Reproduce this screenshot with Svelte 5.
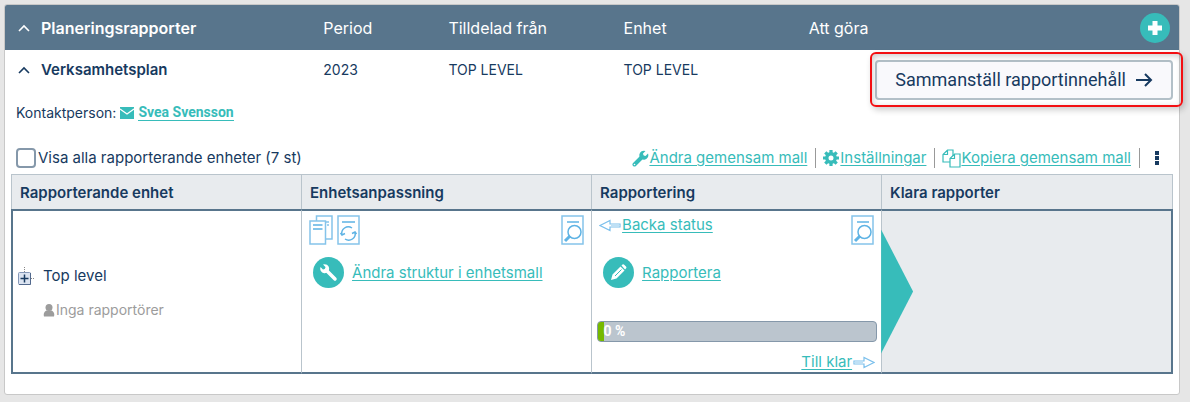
<script lang="ts">
  const columns = ['Period', 'Tilldelad från', 'Enhet', 'Att göra']
  const headings = ['Rapporterande enhet', 'Enhetsanpassning', 'Rapportering', 'Klara rapporter']

  let showAll = $state(false)
  let progress = $state(0)

  // keep a sliver of the bar visible at zero
  const barWidth = $derived(Math.max(progress, 2))
</script>

{#snippet chevron()}
  <svg class="chevron" width="12" height="8" viewBox="0 0 12 8" aria-hidden="true">
    <path d="M1 7 6 2l5 5" fill="none" stroke="currentColor" stroke-width="1.6" />
  </svg>
{/snippet}

{#snippet previewIcon()}
  <svg width="24" height="30" viewBox="0 0 24 30" fill="none" stroke="#5eb3e4" aria-hidden="true">
    <path d="M1 1h21v28H1z" stroke="#85c4ea" stroke-width="1.5" />
    <path d="M6 7h12" stroke-width="1.5" />
    <circle cx="13.5" cy="17" r="6.5" stroke-width="1.5" />
    <path d="m9 21-5 5" stroke-width="3" />
  </svg>
{/snippet}

{#snippet arrow()}
  <path d="M1 6.5 11 1.5v3.500h10v3H11v3.500z" fill="#fff" stroke="#7cc0ec" stroke-width="1.2" />
  <path d="M12 5.500h8.500v2H12z" fill="#bfe0f5" />
{/snippet}

<main class="panel">
  <header class="grid panel-header">
    <button class="toggle title">{@render chevron()}Planeringsrapporter</button>
    {#each columns as column}
      <span>{column}</span>
    {/each}
    <button class="add" aria-label="Lägg till">
      <svg width="16" height="16" viewBox="0 0 16 16" aria-hidden="true">
        <path d="M8 1v14M1 8h14" stroke="#fff" stroke-width="5" />
      </svg>
    </button>
  </header>

  <section class="grid plan">
    <button class="toggle">{@render chevron()}Verksamhetsplan</button>
    <span>2023</span>
    <span>TOP LEVEL</span>
    <span>TOP LEVEL</span>
    <div class="compile">
      <button>
        Sammanställ rapportinnehåll
        <svg width="17" height="16" viewBox="0 0 17 16" aria-hidden="true">
          <path d="M0 8h15M9 2l6 6-6 6" fill="none" stroke="currentColor" stroke-width="2" />
        </svg>
      </button>
    </div>
  </section>

  <div class="contact">
    Kontaktperson:
    <svg width="14" height="12" viewBox="0 0 14 12" aria-hidden="true">
      <path d="M0 0h14v12H0z" fill="#37bcba" />
      <path d="m0 2 7 5 7-5" fill="none" stroke="#fff" stroke-width="1.3" />
    </svg>
    <a href="#contact">Svea Svensson</a>
  </div>

  <div class="toolbar">
    <label>
      <input type="checkbox" bind:checked={showAll} />
      Visa alla rapporterande enheter (7 st)
    </label>
    <nav>
      <a href="#template">
        <svg width="17" height="17" viewBox="0 0 17 17" aria-hidden="true">
          <path d="m2.500 14.500 7.500-7.500" stroke="#37bcba" stroke-width="4" stroke-linecap="round" />
          <path d="M13.500 1 11 3.500l.5 2 2 .5L16 3.500A4.500 4.500 0 1 1 13.500 1z" fill="#37bcba" />
          <circle cx="2.500" cy="14.500" r=".8" fill="#fff" />
        </svg><span>Ändra gemensam mall</span>
      </a>
      <a href="#settings">
        <svg width="17" height="16" viewBox="0 0 17 16" fill="none" stroke="#37bcba" aria-hidden="true">
          <circle cx="8" cy="8" r="4.200" stroke-width="3.400" />
          <path d="M8 0v3M8 13v3M0 8h3M13 8h3M2.300 2.300l2.200 2.200M11.500 11.500l2.200 2.200M13.700 2.300l-2.200 2.200M4.500 11.500l-2.200 2.200" stroke-width="3.200" />
        </svg><span>Inställningar</span>
      </a>
      <a href="#copy">
        <svg width="19" height="19" viewBox="0 0 19 19" fill="#fff" stroke="#37bcba" stroke-width="1.2" aria-hidden="true">
          <path d="M5.500 1H11v12H1V5.500zM5.500 1v4.500H1" />
          <path d="M12.500 5H18v13H8V9.500zM12.500 5v4.500H8" />
        </svg><span>Kopiera gemensam mall</span>
      </a>
      <button class="more" aria-label="Fler val">
        <svg width="4" height="14" viewBox="0 0 4 14" fill="currentColor" aria-hidden="true">
          <path d="M0 0h4v4H0zM0 5h4v4H0zM0 10h4v4H0z" />
        </svg>
      </button>
    </nav>
  </div>

  <table>
    <thead>
      <tr>
        {#each headings as heading}
          <th scope="col">{heading}</th>
        {/each}
      </tr>
    </thead>
    <tbody>
      <tr>
        <td>
          <div class="unit">
            <div class="unit-name">
              <button class="expand" aria-label="Visa underenheter">
                <svg width="18" height="18" viewBox="0 0 18 18" aria-hidden="true">
                  <path d="M6.500 0v5M13 11.500h4" stroke="#888" stroke-dasharray="1 1" />
                  <rect x=".5" y="5.500" width="12" height="12" rx="1" fill="#dce4f1" stroke="#8598b8" />
                  <path d="M12.500 6v11.500H1" fill="none" stroke="#52698d" />
                  <path d="M6.500 7.500v8M2.500 11.500h8" stroke="#173a60" stroke-width="1.500" />
                </svg>
              </button>
              Top level
            </div>
            <div class="reporters">
              <svg width="12" height="13" viewBox="0 0 12 13" fill="#9c9c9c" aria-hidden="true">
                <circle cx="6" cy="3.500" r="3.500" />
                <path d="M1 12.500C0 9 2 7 3.500 6.500h5C10 7 12 9 11 12.500z" />
              </svg>Inga rapportörer
            </div>
          </div>
        </td>
        <td>
          <div class="cell">
            <div class="row">
              <svg width="24" height="30" viewBox="0 0 24 30" fill="#fff" stroke="#85c4ea" stroke-width="1.5" aria-hidden="true">
                <path d="M7.500 1H23v23H7.500zM10 7h10M18 10h2" />
                <path d="M1 6h15.500v23H1z" />
                <path d="M4 10h9.500M4 14h9.500" stroke="#5eb3e4" />
              </svg>
              <svg width="24" height="30" viewBox="0 0 24 30" fill="none" stroke="#5eb3e4" stroke-width="1.5" aria-hidden="true">
                <path d="M1 1h21v28H1z" stroke="#85c4ea" />
                <path d="M5 7h13M5 20a6.500 6.500 0 0 1 10-7M18 17a6.500 6.500 0 0 1-10 7" />
                <path d="M3.500 18 5 20l3-1.500M19.500 19 18 17l-3 1.500" />
              </svg>
              <span class="push">{@render previewIcon()}</span>
            </div>
            <a class="action" href="#structure">
              <svg width="31" height="31" viewBox="0 0 31 31" aria-hidden="true">
                <circle cx="15.500" cy="15.500" r="15.500" fill="#37bcba" />
                <path d="m13 13 9 9" stroke="#fff" stroke-width="3.500" stroke-linecap="round" />
                <path d="m10 7.500 2.500 2.500-.5 2-2 .5L7.500 10a4.500 4.500 0 1 0 2.500-2.500z" fill="#fff" />
              </svg><span>Ändra struktur i enhetsmall</span>
            </a>
          </div>
        </td>
        <td>
          <div class="cell">
            <div class="row">
              <a class="step" href="#back">
                <svg width="23" height="13" viewBox="0 0 23 13" aria-hidden="true">{@render arrow()}</svg><span>Backa status</span>
              </a>
              <span class="push">{@render previewIcon()}</span>
            </div>
            <a class="action" href="#report">
              <svg width="31" height="31" viewBox="0 0 31 31" aria-hidden="true">
                <circle cx="15.500" cy="15.500" r="15.500" fill="#37bcba" />
                <path d="m8 23 1.500-5.500 8-8 4 4-8 8zM18.500 8.500l1-1q1-.5 2 .5l1.500 1.500q1 1 0 2l-1 1z" fill="#fff" />
                <path d="m12 19 6.500-6.500" stroke="#37bcba" />
              </svg><span>Rapportera</span>
            </a>
            <div class="progress" role="progressbar" aria-label="Rapportering" aria-valuenow={progress}>
              <div class="bar" style:width="{barWidth}%"></div>
              {progress} %
            </div>
            <a class="step next" href="#done">
              <span>Till klar</span><svg width="23" height="13" viewBox="0 0 23 13" aria-hidden="true">
                <g transform="rotate(180 11.500 6.500)">{@render arrow()}</g>
              </svg>
            </a>
          </div>
        </td>
        <td class="done">
          <div class="pointer"></div>
        </td>
      </tr>
    </tbody>
  </table>
</main>

<style>
  :global(body) {
    background: #e6e6e6;
  }

  .panel {
    margin: 4px 10px 7px 4px;
    padding-bottom: 20px;
    background: #fff;
    border: 1px solid #c8c8c8;
    border-radius: 3px;
    color: #173a60;
    font: 15px/20px Inter, sans-serif;
  }

  svg {
    display: block;
    flex: none;
  }

  button {
    padding: 0;
    border: 0;
    background: none;
    color: inherit;
    font: inherit;
    cursor: pointer;
  }

  a {
    color: #37bcba;
    text-decoration: none;
  }

  a span {
    text-decoration: underline;
    text-underline-offset: 2px;
  }

  .grid {
    display: grid;
    grid-template-columns: 318fr 125fr 175fr 185fr 322fr 48fr;
  }

  .panel-header {
    align-items: center;
    height: 45px;
    background: #58758c;
    border-radius: 2px 2px 0 0;
    color: #fff;
    font-size: 16px;
  }

  .toggle {
    display: flex;
    align-items: center;
    gap: 11px;
    padding-left: 13px;
    font-weight: 600;
  }

  .add {
    display: grid;
    place-items: center;
    justify-self: center;
    width: 30px;
    height: 30px;
    border-radius: 50%;
    background: #37bcba;
  }

  .plan {
    align-items: start;
    padding-top: 10px;
    font-size: 14px;
  }

  .plan .toggle {
    font-size: 15px;
  }

  .compile {
    position: relative;
    grid-column: 5 / -1;
    justify-self: end;
    margin-right: 6px;
  }

  .compile button {
    display: flex;
    align-items: center;
    gap: 10px;
    height: 40px;
    padding: 0 18px;
    border: 2px solid #b3c0c8;
    border-radius: 4px;
    background: #f9f9fc;
    font: 18px/24px Roboto, sans-serif;
  }

  .compile::after {
    content: '';
    position: absolute;
    inset: -8px -10px -7px -5px;
    border: 2px solid #f30f12;
    border-radius: 6px;
    box-shadow: 2px 3px 6px #0003, inset 1px 2px 6px #0003;
    pointer-events: none;
  }

  .contact {
    display: flex;
    align-items: center;
    gap: 4px;
    padding: 3px 11px 0;
    font-size: 14px;
  }

  .contact a {
    border-bottom: 1px solid;
    font: bold 14px/15px Roboto, sans-serif;
  }

  .toolbar {
    display: flex;
    justify-content: space-between;
    align-items: center;
    height: 20px;
    margin: 25px 6px 6px 11px;
  }

  .toolbar label {
    display: flex;
    align-items: center;
    gap: 2px;
  }

  .toolbar input {
    appearance: none;
    width: 20px;
    height: 20px;
    margin: 0;
    border: 2px solid #8598aa;
    border-radius: 4px;
    background: #fff;
  }

  .toolbar input:checked {
    background: #37bcba;
  }

  nav {
    display: flex;
    align-items: center;
  }

  nav a {
    display: flex;
    align-items: center;
    padding-right: 8px;
    margin-right: 7px;
    border-right: 1px solid #999;
  }

  .more {
    padding: 0 14px 0 8px;
  }

  table {
    width: calc(100% - 12px);
    margin: 0 6px;
    border-spacing: 0;
    table-layout: fixed;
  }

  th {
    box-sizing: border-box;
    width: 24.96%;
    height: 35px;
    padding: 2px 8px 0;
    border: solid #b9c4cc;
    border-width: 1px 0 0 1px;
    background: #e8ebee;
    font-weight: 600;
    text-align: left;
  }

  th:last-child {
    width: auto;
    border-right-width: 1px;
  }

  td {
    height: 161px;
    padding: 0;
    border: solid #58758c;
    border-width: 2px 0;
    border-left: 1px solid #b9c4cc;
    vertical-align: top;
  }

  td:first-child {
    border-left: 2px solid #58758c;
    vertical-align: middle;
  }

  td:last-child {
    border-right: 2px solid #58758c;
  }

  .unit {
    display: flex;
    flex-direction: column;
    gap: 14px;
    padding: 3px 0 0 5px;
  }

  .unit-name {
    display: flex;
    align-items: center;
    gap: 7px;
  }

  .reporters {
    display: flex;
    align-items: center;
    gap: 1px;
    padding-left: 25px;
    color: #9c9c9c;
    font-size: 14px;
  }

  .cell {
    display: flex;
    flex-direction: column;
    padding: 4px 6px 0 7px;
  }

  .row {
    display: flex;
    gap: 4px;
    height: 30px;
  }

  .push {
    margin-left: auto;
  }

  .action {
    display: flex;
    align-items: center;
    gap: 8px;
    margin-top: 12px;
    padding-left: 4px;
  }

  .step {
    display: flex;
    align-items: center;
    height: 20px;
  }

  .next {
    justify-content: flex-end;
    margin-top: 10px;
  }

  .progress {
    display: flex;
    height: 19px;
    margin: 33px -2px 0;
    overflow: hidden;
    border: 1px solid #8598aa;
    border-radius: 4px;
    background: #bbc5ce;
    color: #fff;
    font: bold 14px/18px Roboto, sans-serif;
  }

  .bar {
    background: #76b900;
  }

  .done {
    position: relative;
    background: #e8ebee;
  }

  .pointer {
    position: absolute;
    top: 50%;
    left: -1px;
    width: 32px;
    height: 124px;
    background: #37bcba;
    clip-path: polygon(0 0, 100% 50%, 0 100%);
    transform: translateY(-50%);
  }
</style>
